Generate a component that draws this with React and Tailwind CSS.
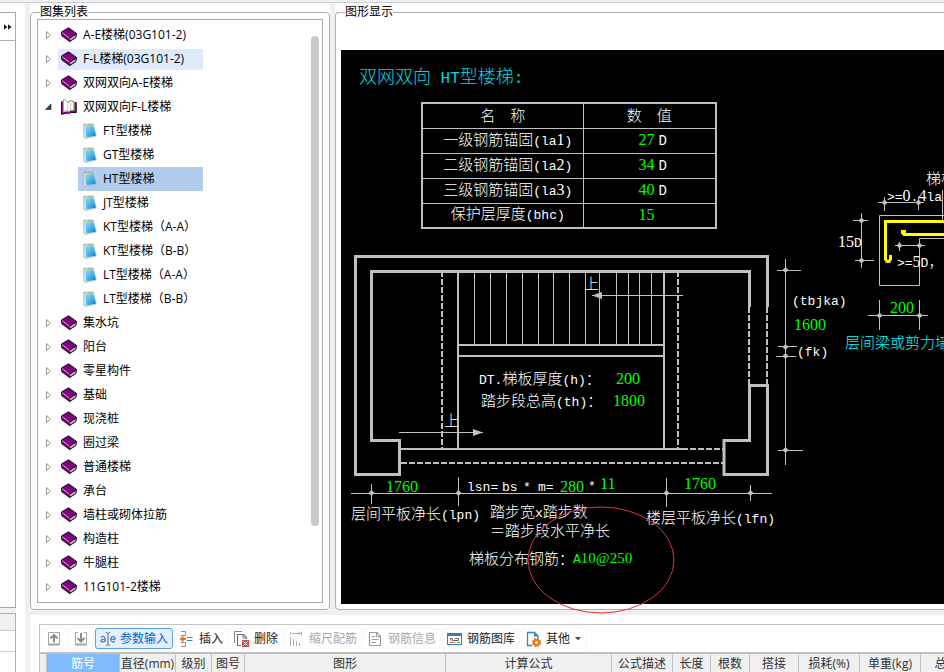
import React from "react";

const UI_FONT = "font-['Open_Sans','Noto_Sans_CJK_SC',sans-serif]";
const CAD_FONT = "font-['Liberation_Serif','Noto_Sans_CJK_SC',serif]";

const STAIR_ITEMS = [
  "FT型楼梯",
  "GT型楼梯",
  "HT型楼梯",
  "JT型楼梯",
  "KT型楼梯（A-A）",
  "KT型楼梯（B-B）",
  "LT型楼梯（A-A）",
  "LT型楼梯（B-B）",
];

const CATALOG = [
  { label: "A-E楼梯(03G101-2)" },
  { label: "F-L楼梯(03G101-2)", hovered: true },
  { label: "双网双向A-E楼梯" },
  { label: "双网双向F-L楼梯", children: STAIR_ITEMS },
  { label: "集水坑" },
  { label: "阳台" },
  { label: "零星构件" },
  { label: "基础" },
  { label: "现浇桩" },
  { label: "圈过梁" },
  { label: "普通楼梯" },
  { label: "承台" },
  { label: "墙柱或砌体拉筋" },
  { label: "构造柱" },
  { label: "牛腿柱" },
  { label: "11G101-2楼梯" },
];

/* ---------- icons ---------- */

function BookIcon() {
  return (
    <svg width="16" height="16" viewBox="0 0 16 16" className="shrink-0" aria-hidden="true">
      <path d="M0.5 5 L7.5 0.8 L15.5 6.4 L14.8 10.6 L8.6 14.6 L0.8 8.8 Z" fill="#800080" stroke="#000" strokeWidth="0.9" />
      <path d="M8.8 11.4 L15.2 7.6 L14.6 10.4 L8.8 14 Z" fill="#fff" stroke="#000" strokeWidth="0.7" />
      <path d="M10 12.1 L14.2 9.6" stroke="#909090" strokeWidth="0.7" />
      <path d="M1.2 5.8 L8.4 11" stroke="#f4d8f4" strokeWidth="0.8" fill="none" />
    </svg>
  );
}

function OpenBookIcon() {
  return (
    <svg width="16" height="16" viewBox="0 0 16 16" className="shrink-0" aria-hidden="true">
      <path d="M1 2.5 L1 14.5 L5.5 13.4 L7.5 14.2 L10 13 L14.5 13 L14.5 3" fill="#fff" stroke="#800080" strokeWidth="1.8" />
      <path d="M0.4 2.5 V15 L5.5 14.4" fill="none" stroke="#000" strokeWidth="0.8" />
      <path d="M2.4 1 L4 0.6 L7 3.5 L7 13 L5 11.6 L2.4 12.4 Z" fill="#fff" stroke="#808080" strokeWidth="0.8" />
      <path d="M7 3.5 L9.5 1.5 L13 3 V12 L10 11.6 L7.2 13" fill="#fff" stroke="#404040" strokeWidth="0.8" />
      <path d="M9.5 3.5 V11" stroke="#e4dc88" strokeWidth="1.4" />
      <path d="M15.3 3.5 V13.5 H10" fill="none" stroke="#000" strokeWidth="0.8" />
    </svg>
  );
}

function SheetIcon() {
  return (
    <svg width="14" height="16" viewBox="0 0 14 16" className="shrink-0" aria-hidden="true">
      <defs>
        <linearGradient id="sheet" x1="0" y1="0" x2="1" y2="1">
          <stop offset="0" stopColor="#a4e0f8" />
          <stop offset="0.5" stopColor="#4cb8ec" />
          <stop offset="1" stopColor="#1c78c4" />
        </linearGradient>
      </defs>
      <path d="M0.5 1.4 L10 0.8 L13.3 13 L3 15.4 L0.8 14.6 Z" fill="#d4e6e6" stroke="#8cacb0" strokeWidth="0.6" />
      <path d="M1.8 2.8 L10 2.2 L12.9 12.8 L3.4 14.2 Z" fill="url(#sheet)" />
      <path d="M1 1.5 H10" stroke="#948c5c" strokeWidth="0.9" strokeDasharray="1 1" />
    </svg>
  );
}

function MoveIcon({ down }) {
  return (
    <svg width="14" height="16" viewBox="0 0 14 16" fill="none" stroke="#8c8c8c" aria-hidden="true">
      <path d={down ? "M4 1.5 H1.5 V12 M10 1.5 H12.5 V12" : "M1.5 13 V1.5 H12.5 V13"} stroke="#a4a4a4" />
      <path d="M1 13.5 H13" stroke="#a4a4a4" strokeWidth="2" />
      <path d={down ? "M7 2 V10 M3.5 7 L7 10.5 L10.5 7" : "M7 11.5 V4.5 M3.5 7.5 L7 4 L10.5 7.5"} strokeWidth="2" />
    </svg>
  );
}

function InputCursorIcon() {
  return (
    <svg width="16" height="16" viewBox="0 0 16 16" fill="none" aria-hidden="true">
      <path d="M1 6.5 C2 5 5 5 5 7.5 V11 M5 8.3 C2 8 0.8 9 1 10 C1.5 11.6 4.5 11 5 9.5" stroke="#3a78c8" strokeWidth="1.2" />
      <path d="M10.8 8.2 H15.2 C15.2 4.6 10.8 4.6 10.8 8.2 C10.8 11.6 14 11.4 15 10.2" stroke="#3a78c8" strokeWidth="1.2" />
      <path d="M8 2.5 V13.5 M5.8 1.5 C7 1.5 8 2 8 3 C8 2 9 1.5 10.2 1.5 M5.8 14.5 C7 14.5 8 14 8 13 C8 14 9 14.5 10.2 14.5" stroke="#666" />
    </svg>
  );
}

function InsertIcon() {
  return (
    <svg width="16" height="16" viewBox="0 0 16 16" fill="none" aria-hidden="true">
      <path d="M2 0.5 H6.5 V4.5 H2 M2 11.5 H6.5 V15.5 H2" stroke="#8a949c" />
      <path d="M2 8 H7" stroke="#f07020" strokeWidth="2" />
      <path d="M0.5 8 L4.5 4.6 V11.4 Z" fill="#f07020" />
      <path d="M8 6.5 H13.5 M8 9.5 H13.5" stroke="#3a80d0" strokeWidth="1.2" />
    </svg>
  );
}

function DeleteIcon() {
  return (
    <svg width="16" height="16" viewBox="0 0 16 16" fill="none" aria-hidden="true">
      <path d="M0.5 12 V0.5 H8" stroke="#7c8890" />
      <path d="M7 14.5 H3.5 V3.5 H9.5 L12.5 6.5 V8" stroke="#66747c" strokeWidth="1.2" />
      <path d="M9 3.5 V7 H12.5" stroke="#66747c" />
      <rect x="8" y="9" width="7" height="7" fill="#d04848" />
      <path d="M9.5 10.5 L13.5 14.5 M13.5 10.5 L9.5 14.5" stroke="#fff" />
    </svg>
  );
}

function ScaleIcon() {
  return (
    <svg width="16" height="16" viewBox="0 0 16 16" fill="none" stroke="#b0b0b0" aria-hidden="true">
      <path d="M1.5 1 V4 M12.5 1 V4 M3 2.5 H11 M9.5 1 L11.5 2.5 L9.5 4" />
      <path d="M1.5 6 V15 M4.5 8 V15 M7.5 10 V15 M10.5 12 V15" />
    </svg>
  );
}

function InfoIcon() {
  return (
    <svg width="16" height="16" viewBox="0 0 16 16" fill="none" stroke="#9c9c9c" aria-hidden="true">
      <path d="M1.5 1.5 H9 L12.5 5 V14.5 H1.5 Z M8.5 1.5 V5.5 H12.5" strokeWidth="1.2" />
      <path d="M3.5 5.5 H7 M3.5 8.5 H10.5 M3.5 11.5 H8" />
    </svg>
  );
}

function LibraryIcon() {
  return (
    <svg width="16" height="16" viewBox="0 0 16 16" fill="none" aria-hidden="true">
      <rect x="0.5" y="2.5" width="14" height="11" fill="#fff" stroke="#3f78bc" />
      <path d="M0 3.5 H15" stroke="#3f78bc" strokeWidth="3" />
      <path d="M3.5 9.5 V7.5 H5.5 V9.5 H11.5 V7.5 H8" stroke="#666" />
      <path d="M3 11.5 H6" stroke="#e05040" />
      <path d="M6 11.5 H9" stroke="#e0b030" />
      <path d="M10 11.5 H13" stroke="#40a060" />
    </svg>
  );
}

function OtherIcon() {
  return (
    <svg width="16" height="16" viewBox="0 0 16 16" fill="none" aria-hidden="true">
      <path d="M6 14.5 H1.5 V1.5 H8.5 L12 5 V8" stroke="#3a80d0" strokeWidth="1.3" />
      <path d="M8 1 V5.5 H12.5 Z" fill="#3a80d0" />
      <circle cx="10.5" cy="11.5" r="2.6" stroke="#f07820" strokeWidth="2.2" />
      <circle cx="10.5" cy="11.5" r="4" stroke="#f07820" strokeWidth="1.2" strokeDasharray="2 1.14" />
    </svg>
  );
}

/* ---------- catalogue tree ---------- */

function TreeLeaf({ label, selected }) {
  return (
    <li role="treeitem" aria-selected={selected} className="flex h-6 pl-10">
      <button
        type="button"
        className={`flex h-6 w-[125px] items-center gap-1.5 whitespace-nowrap pl-[5px] text-left ${selected ? "bg-[#b2ccee]" : ""}`}
      >
        <SheetIcon />
        {label}
      </button>
    </li>
  );
}

function TreeNode({ node }) {
  const open = Boolean(node.children);
  return (
    <li role="treeitem" aria-expanded={open}>
      <div className="flex h-6 items-center">
        <button type="button" aria-label={open ? "收起" : "展开"} className="flex h-6 w-5 shrink-0 items-center pl-[7px]">
          <svg width="8" height="10" viewBox="0 0 8 10" aria-hidden="true">
            {open ? (
              <path d="M6 2 V7.5 H0.5 Z" fill="#404040" stroke="#202020" strokeWidth="0.6" />
            ) : (
              <path d="M1.5 1.5 L5.5 5 L1.5 8.5 Z" fill="#fff" stroke="#989898" />
            )}
          </svg>
        </button>
        <button
          type="button"
          className={`flex h-[21px] w-[145px] items-center gap-1.5 whitespace-nowrap pl-[3px] text-left ${node.hovered ? "bg-[#dfeafa]" : ""}`}
        >
          {open ? <OpenBookIcon /> : <BookIcon />}
          {node.label}
        </button>
      </div>
      {open && (
        <ul role="group">
          {node.children.map((c) => (
            <TreeLeaf key={c} label={c} selected={c === "HT型楼梯"} />
          ))}
        </ul>
      )}
    </li>
  );
}

function CatalogPanel() {
  return (
    <fieldset className="flex w-[300px] shrink-0 flex-col rounded border border-[#b0b0b0] bg-white px-1.5 pb-1.5">
      <legend className="ml-[3px] text-xs leading-[14px]">图集列表</legend>
      <div className="flex h-full justify-between border border-[#a8a8a8] pr-[3px] pt-[3px]">
        <ul role="tree" aria-label="图集列表" className="text-xs leading-5">
          {CATALOG.map((n) => (
            <TreeNode key={n.label} node={n} />
          ))}
        </ul>
        <div className="mb-[76px] mt-[13px] w-2 rounded-full bg-[#cacaca]" />
      </div>
    </fieldset>
  );
}

/* ---------- stair drawing ---------- */

const PARAM_ROWS = [
  { name: "一级钢筋锚固(la1)", value: "27", unit: "D" },
  { name: "二级钢筋锚固(la2)", value: "34", unit: "D" },
  { name: "三级钢筋锚固(la3)", value: "40", unit: "D" },
  { name: "保护层厚度(bhc)", value: "15", unit: "" },
];

/* Three kinds of run: Chinese, digits (serif, inherited) and Latin letters or signs (monospaced). */
const RUNS = /[\u3000-\uffef]+|[0-9@]+|[^\u3000-\uffef0-9@]+/g;

function runClass(run) {
  if (/[\u3000-\uffef]/.test(run)) return "text-[15px] font-light";
  if (/[0-9@]/.test(run)) return undefined;
  return "font-['Liberation_Mono',monospace] text-[13px]";
}

function Mixed({ children, svg }) {
  const Tag = svg ? "tspan" : "span";
  return children.match(RUNS).map((run, i) => (
    <Tag key={i} className={runClass(run)}>
      {run}
    </Tag>
  ));
}

function T({ x, y, fill = "#fff", size = "text-base", children }) {
  return (
    <text x={x} y={y} fill={fill} className={size}>
      <Mixed svg>{children}</Mixed>
    </text>
  );
}

const GREEN = "#00ff00";

const NODES = [
  [371.5, 493], [458.5, 493], [666.5, 493], [750.5, 493],
  [785.5, 270], [785.5, 347], [785.5, 356], [785.5, 450],
  [884.5, 202.5], [918.5, 202.5], [861.5, 220.5], [861.5, 260.5],
  [899.5, 245.5], [919.5, 245.5], [879.5, 315.5], [919.5, 315.5],
];

const TREADS = [474, 490, 506, 522, 538, 553, 569, 585, 599, 616, 628, 639, 651];

function StairDrawing() {
  return (
    <svg
      width="603"
      height="554"
      viewBox="341 50 603 554"
      className={`absolute left-0 top-0 overflow-visible ${CAD_FONT}`}
      role="img"
      aria-label="HT型楼梯平面图"
    >
      <g fill="none" stroke="#c0c0c0" strokeWidth="3">
        <path d="M767.5 307 V256.5 H355.5 V474.5 H399.5 V440.5 H371.5 V271.5 H749.5 V307" />
        <path d="M749.5 440.5 V385.5 H767.5 V474.5 H724 V440.5 H751" />
      </g>
      <g fill="none" stroke="#c0c0c0" strokeWidth="2">
        <path d="M458 273 V449 M664 273 V449 M458 345 H664 M458 356 H664 M400 449 H682" />
        <path
          strokeDasharray="6 2"
          d="M442 271 V448 M678 271 V448 M682 449 H723 M401 463 H723 M749 307 V384 M767 307 V384"
        />
      </g>
      <g fill="none" stroke="#c0c0c0">
        {TREADS.map((x) => (
          <path key={x} d={`M${x + 0.5} 273 V345`} />
        ))}
        <path d="M399 432.5 H483 M592 295.5 H683" />
        <path d="M351 493.5 H772 M371.5 484 V504 M458.5 477 V506 M666.5 478 V507 M750.5 485 V501" />
        <path d="M785.5 259 V465 M777 270.5 H801 M778 346.5 H797 M776 356.5 H796 M778 450.5 H803" />
        <path d="M944 215.5 H879.5 V285.5 H919.5 V238.5 H944 M942.5 190 V221" />
        <path d="M878 202.5 H924 M884.5 197 V211 M918.5 197 V210" />
        <path d="M861.5 213 V268 M853 220.5 H868 M855 260.5 H874" />
        <path d="M895 245.5 H925 M899.5 242 V251 M919.5 242 V251" />
        <path d="M868 315.5 H928 M879.5 300 V330 M919.5 300 V330" />
      </g>
      <g fill="#c0c0c0">
        <path d="M473 429 L483 432.5 L473 436 Z M602 292 L592 295.5 L602 299 Z" />
        {NODES.map(([x, y]) => (
          <path key={`${x}-${y}`} d={`M${x - 3} ${y} L${x} ${y - 3} L${x + 3} ${y} L${x} ${y + 3} Z`} />
        ))}
      </g>
      <g fill="none" stroke="#ffff00" strokeWidth="3">
        <path d="M944 221.5 H885.5 V259 L887 261.5 H889 L890.5 259 V255" />
        <path d="M944 234.5 H904 L902.5 233 V231.5 H906" />
      </g>

      <T x={584} y={289}>上</T>
      <T x={444} y={426}>上</T>
      <T x={479} y={384}>DT.梯板厚度(h)：</T>
      <T x={616} y={384} fill={GREEN}>200</T>
      <T x={481} y={406}>踏步段总高(th)：</T>
      <T x={613} y={406} fill={GREEN}>1800</T>

      <T x={386} y={492} fill={GREEN}>1760</T>
      <T x={467} y={491}>lsn=</T>
      <T x={502} y={491}>bs</T>
      <T x={523} y={491}>*</T>
      <T x={538} y={491}>m=</T>
      <T x={560} y={492} fill={GREEN}>280</T>
      <T x={588} y={490}>*</T>
      <T x={600} y={489} fill={GREEN}>11</T>
      <T x={684} y={489} fill={GREEN}>1760</T>

      <T x={351} y={519}>层间平板净长(lpn)</T>
      <T x={490} y={517}>踏步宽x踏步数</T>
      <T x={490} y={536}>＝踏步段水平净长</T>
      <T x={646} y={523}>楼层平板净长(lfn)</T>
      <T x={469} y={564}>梯板分布钢筋：</T>
      <T x={573} y={563} fill={GREEN} size="text-[15px]">A10@250</T>

      <T x={792} y={305}>(tbjka)</T>
      <T x={794} y={330} fill={GREEN}>1600</T>
      <T x={797} y={356}>(fk)</T>
      <T x={838} y={247}>15D</T>
      <T x={926} y={184}>梯板</T>
      <T x={887} y={201}>&gt;=0.4la</T>
      <T x={897} y={267}>&gt;=5D，</T>
      <T x={890} y={313} fill={GREEN}>200</T>
      <T x={845} y={348} fill="#00ffff">层间梁或剪力墙</T>

      <ellipse cx="601" cy="560" rx="73" ry="53" fill="none" stroke="#e03838" />
    </svg>
  );
}

function ParameterTable() {
  return (
    <table className={`ml-20 mt-[11px] w-[296px] table-fixed border-collapse border-2 border-[#c0c0c0] text-base leading-5 text-white ${CAD_FONT}`}>
      <thead>
        <tr className="h-[25px]">
          <th className="w-[161px] border border-[#c0c0c0] p-0 text-[15px] font-light">名&emsp;称</th>
          <th className="border border-[#c0c0c0] p-0 text-[15px] font-light">数&emsp;值</th>
        </tr>
      </thead>
      <tbody>
        {PARAM_ROWS.map((r) => (
          <tr key={r.name} className="h-[25px]">
            <td className="border border-[#c0c0c0] p-0 pl-2.5 text-center">
              <Mixed>{r.name}</Mixed>
            </td>
            <td className="border border-[#c0c0c0] p-0 pl-[55px]">
              <span className="text-[#00ff00]">{r.value}</span>
              {r.unit && <span className="pl-1 font-['Liberation_Mono',monospace] text-sm">{r.unit}</span>}
            </td>
          </tr>
        ))}
      </tbody>
    </table>
  );
}

function DrawingPanel() {
  return (
    <fieldset className="relative z-10 flex min-w-0 flex-1 flex-col rounded-l border border-r-0 border-[#b0b0b0] bg-white pb-[5px] pl-[5px]">
      <legend className="ml-1 text-xs leading-[14px]">图形显示</legend>
      <div className="relative mt-[31px] h-[554px] bg-black pt-4">
        <StairDrawing />
        <h2 className="relative pl-[18px] font-['Liberation_Mono','Noto_Sans_CJK_SC',monospace] text-lg font-light leading-6 text-[#00d8e0]">
          双网双向<span className="text-base"> HT</span>型楼梯<span className="text-base">:</span>
        </h2>
        <ParameterTable />
      </div>
    </fieldset>
  );
}

/* ---------- rebar toolbar and grid ---------- */

function ToolButton({ icon, children, active, disabled, menu }) {
  const tone = active
    ? "border-[#5a9fe8] bg-[#e4f0fd] text-[#0066cc]"
    : disabled
      ? "border-[#f7f7f7] text-[#a8a8a8]"
      : "border-[#f7f7f7] text-[#202020]";
  return (
    <button
      type="button"
      disabled={disabled}
      className={`flex h-[21px] items-center gap-1 whitespace-nowrap rounded-[3px] border px-1 ${tone}`}
    >
      {icon}
      {children}
      {menu && (
        <svg width="8" height="6" viewBox="0 0 8 6" aria-hidden="true">
          <path d="M1 1 H7 L4 4.5 Z" fill="#505050" />
        </svg>
      )}
    </button>
  );
}

const COLUMNS = [
  ["", "w-[7px]"],
  ["筋号", "w-[73px]"],
  ["直径(mm)", "w-14"],
  ["级别", "w-9"],
  ["图号", "w-[33px]"],
  ["图形", "w-[201px]"],
  ["计算公式", "w-[166px]"],
  ["公式描述", "w-[61px]"],
  ["长度", "w-[38px]"],
  ["根数", "w-[39px]"],
  ["搭接", "w-[49px]"],
  ["损耗(%)", "w-[61px]"],
  ["单重(kg)", "w-[61px]"],
  ["总重(kg)", "w-[72px]"],
];

function RebarPanel() {
  return (
    <section className="min-h-0 flex-1 overflow-hidden bg-white pl-[9px] pt-[9px] text-xs">
      <div className="border-l border-t border-[#c4c4c4]">
        <div role="toolbar" aria-label="钢筋" className="flex h-[27px] items-center gap-px pl-px">
          <button type="button" aria-label="上移" className="flex h-[21px] w-[26px] items-center justify-center rounded-[3px] border border-[#f7f7f7]">
            <MoveIcon />
          </button>
          <button type="button" aria-label="下移" className="flex h-[21px] w-[26px] items-center justify-center rounded-[3px] border border-[#f7f7f7]">
            <MoveIcon down />
          </button>
          <ToolButton active icon={<InputCursorIcon />}>参数输入</ToolButton>
          <ToolButton icon={<InsertIcon />}>插入</ToolButton>
          <ToolButton icon={<DeleteIcon />}>删除</ToolButton>
          <ToolButton disabled icon={<ScaleIcon />}>缩尺配筋</ToolButton>
          <ToolButton disabled icon={<InfoIcon />}>钢筋信息</ToolButton>
          <ToolButton icon={<LibraryIcon />}>钢筋图库</ToolButton>
          <ToolButton menu icon={<OtherIcon />}>其他</ToolButton>
        </div>
        <table className="w-[953px] table-fixed border-separate border-spacing-0 border-t-2 border-[#c0c0c0] bg-[#f0f0f0] text-[#303030]">
          <thead>
            <tr>
              {COLUMNS.map(([title, width]) => (
                <th
                  key={title || "row"}
                  className={`h-[19px] whitespace-nowrap border-r border-[#c0c0c0] p-0 font-normal leading-[19px] ${width} ${title === "筋号" ? "bg-[#80bbfb] font-medium text-white" : ""}`}
                >
                  {title}
                </th>
              ))}
            </tr>
          </thead>
        </table>
      </div>
    </section>
  );
}

export default function App() {
  return (
    <div className={`flex h-screen flex-col overflow-hidden bg-white text-black ${UI_FONT}`}>
      <div className="h-[3px] shrink-0 border-b border-[#c8ccd6] bg-[#f0f0f0]" />
      <div className="flex min-h-0 flex-1">
        <aside className="flex w-4 shrink-0 flex-col bg-[#f0f0f0]">
          <div className="h-[9px] shrink-0 bg-white" />
          <div className="flex h-[596px] shrink-0 flex-col border-y border-r border-[#a8a8a8] bg-white">
            <button type="button" aria-label="展开面板" className="flex h-7 items-center justify-end border-b border-[#b0b0b0] pr-[3px]">
              <svg width="8" height="6" viewBox="0 0 8 6" aria-hidden="true">
                <path d="M0 0.3 L3.4 3 L0 5.7 Z M4 0.3 L7.6 3 L4 5.7 Z" fill="#202020" />
              </svg>
            </button>
          </div>
          <div className="mt-[5px] flex-1 border-r border-t border-[#b0b0b0] bg-white">
            <div className="h-[17px] border-b border-[#c8c8c8] bg-[#f0f0f0]" />
            <div className="h-[21px] border-b border-[#d0d0d0]" />
          </div>
        </aside>
        <div className="w-[9px] shrink-0" />
        <main className="flex min-w-0 flex-1 flex-col bg-[#f0f0f0] pl-[5px]">
          <div className="mb-[5px] flex h-[607px] shrink-0 gap-[5px]">
            <div className="flex bg-white pt-0.5">
              <CatalogPanel />
            </div>
            <div className="flex min-w-0 flex-1 bg-white pt-0.5">
              <DrawingPanel />
            </div>
          </div>
          <RebarPanel />
        </main>
      </div>
    </div>
  );
}
